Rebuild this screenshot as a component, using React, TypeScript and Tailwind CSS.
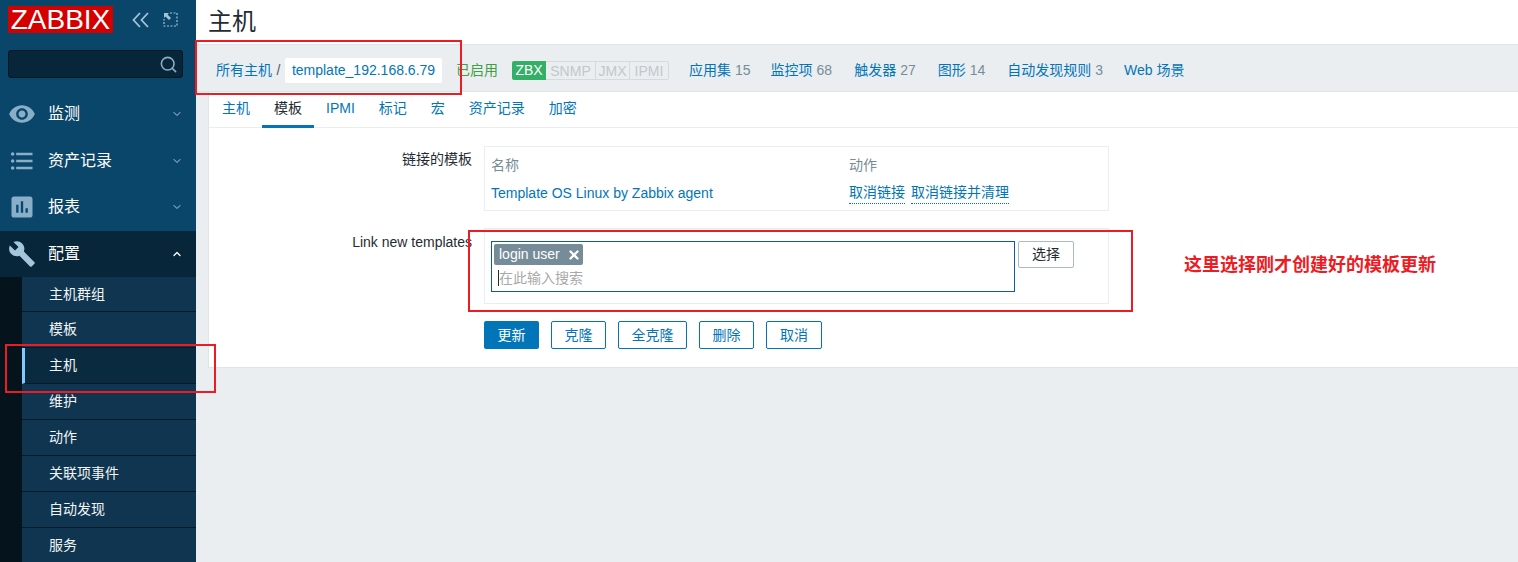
import { ChevronDown, ChevronUp, Search, X } from "lucide-react";
import { MdAssessment, MdBuild, MdFormatListBulleted, MdRemoveRedEye } from "react-icons/md";

const navItems = [
  { label: "监测", icon: <MdRemoveRedEye size={28} /> },
  { label: "资产记录", icon: <MdFormatListBulleted size={28} /> },
  { label: "报表", icon: <MdAssessment size={28} /> },
];

const subItems = ["主机群组", "模板", "主机", "维护", "动作", "关联项事件", "自动发现", "服务"];

const hostLinks = [
  { label: "应用集", count: "15", left: "" },
  { label: "监控项", count: "68", left: "ml-[20px]" },
  { label: "触发器", count: "27", left: "ml-[22px]" },
  { label: "图形", count: "14", left: "ml-[22px]" },
  { label: "自动发现规则", count: "3", left: "ml-[22px]" },
  { label: "Web 场景", count: "", left: "ml-[21px]" },
];

const tabs = ["主机", "模板", "IPMI", "标记", "宏", "资产记录", "加密"];

const buttons = [
  { label: "克隆", width: "w-[55px]" },
  { label: "全克隆", width: "w-[69px]" },
  { label: "删除", width: "w-[55px]" },
  { label: "取消", width: "w-[56px]" },
];

const Sidebar = () => (
  <aside className="w-[196px] shrink-0 h-full bg-[#0a466a] flex flex-col overflow-hidden">
    <div className="h-[91px] shrink-0 px-2 pt-[6px]">
      <div className="flex items-center">
        <div className="w-[105px] h-[27px] bg-[#d40000] text-white text-[28px] leading-[27px] text-center">
          ZABBIX
        </div>
        <svg width="18" height="16" viewBox="0 0 18 16" className="ml-[19px] text-[#a6c3d6]" fill="none" stroke="currentColor" strokeWidth="1.8">
          <path d="M8 1 1.5 8 8 15M16 1 9.5 8 16 15" />
        </svg>
        <svg width="15" height="15" viewBox="0 0 15 15" className="ml-[13px] text-[#a6c3d6]" fill="none" stroke="currentColor" strokeWidth="1.2">
          <path d="M7 1h7v13H1V7" strokeDasharray="2 1.5" />
          <path d="M1 1h5L4.500 2.500 8 6 6 8 2.500 4.500 1 6z" fill="currentColor" stroke="none" />
        </svg>
      </div>
      <div className="mt-[17px] h-[28px] w-[175px] rounded-[3px] bg-[#07263a] border border-[#041722] flex items-center justify-end pr-[4px]">
        <Search size={19} strokeWidth={2} className="text-[#8fb0c4]" />
      </div>
    </div>

    {navItems.map((item) => (
      <div key={item.label} className="h-[46.5px] shrink-0 flex items-center text-white">
        <span className="w-[48px] pl-[8px] text-[#88aec8] shrink-0 flex">{item.icon}</span>
        <span className="text-[16px]">{item.label}</span>
        <ChevronDown size={12} strokeWidth={2} className="ml-auto mr-[13px] text-[#b5ccdb]" />
      </div>
    ))}
    <div className="h-[46.5px] shrink-0 flex items-center text-white bg-[#08263a]">
      <span className="w-[48px] pl-[8px] text-[#a3c6dc] shrink-0 flex">
        <MdBuild size={28} />
      </span>
      <span className="text-[16px]">配置</span>
      <ChevronUp size={12} strokeWidth={2.5} className="ml-auto mr-[13px] text-white" />
    </div>

    <div className="flex-1 bg-[#04131c] pl-[22px]">
      {subItems.map((label, idx) => {
        const isActive = label === "主机";
        return (
          <div
            key={label}
            className={`${idx === 0 ? "h-[35px]" : "h-9"} flex items-center text-[14px] text-[#f2f5f7] border-b border-[#061a28] ${
              isActive ? "bg-[#0a2a40] border-l-[3px] border-l-[#7fcbff] pl-[24px]" : "bg-[#0f3550] pl-[27px]"
            }`}
          >
            {label}
          </div>
        );
      })}
    </div>
  </aside>
);

const HostBar = () => (
  <div className="h-[48px] shrink-0 bg-[#ebeef0] border-y border-[#dfe4e7] flex items-center pl-[20px] pt-[4px] text-[14px]">
    <span className="text-[#0275b8]">所有主机</span>
    <span className="w-[13px] text-center text-[#4a5a63]">/</span>
    <span className="h-[25px] w-[157px] bg-white rounded-[2px] flex items-center justify-center text-[#0275b8]">
      template_192.168.6.79
    </span>
    <span className="ml-[14px] text-[#429e47]">已启用</span>
    <div className="ml-[14px] flex h-[19px] text-[14px] leading-[19px] text-center">
      <span className="w-[34px] bg-[#34af67] text-white rounded-l-[2px]">ZBX</span>
      <span className="w-[50px] bg-[#ebeef0] text-[#c0c8cd] border-y border-r border-[#d5dadd]">SNMP</span>
      <span className="w-[34px] bg-[#ebeef0] text-[#c0c8cd] border-y border-r border-[#d5dadd]">JMX</span>
      <span className="w-[39px] bg-[#ebeef0] text-[#c0c8cd] border-y border-r border-[#d5dadd] rounded-r-[2px]">IPMI</span>
    </div>
    <div className="ml-[20px] flex">
      {hostLinks.map((link) => (
        <span key={link.label} className={link.left}>
          <span className="text-[#0275b8]">{link.label}</span>
          {link.count && <span className="ml-[4px] text-[#768d99]">{link.count}</span>}
        </span>
      ))}
    </div>
  </div>
);

const TabBar = () => (
  <div className="h-[36px] flex border-b border-[#ebeef0] pl-px text-[14px]">
    {tabs.map((tab) => (
      <div
        key={tab}
        className={`px-[12px] flex items-center border-b-[3px] -mb-px ${
          tab === "模板" ? "border-[#0275b8] text-[#1f2c33]" : "border-transparent text-[#0275b8]"
        }`}
      >
        {tab}
      </div>
    ))}
  </div>
);

const Form = () => (
  <div className="pt-[18px] pb-[18px] text-[14px]">
    <div className="flex">
      <div className="w-[263px] pt-[3px] text-right text-[#1f2c33]">链接的模板</div>
      <div className="ml-[12px] w-[625px] h-[65px] border border-[#ebeef0] px-[6px]">
        <div className="flex h-[29px] items-end text-[#768d99]">
          <span className="w-[358px]">名称</span>
          <span>动作</span>
        </div>
        <div className="flex mt-[7px] h-[20px] items-center text-[#0275b8]">
          <span className="w-[358px]">Template OS Linux by Zabbix agent</span>
          <span className="border-b border-dotted border-[#0275b8]">取消链接</span>
          <span className="ml-[6px] border-b border-dotted border-[#0275b8]">取消链接并清理</span>
        </div>
      </div>
    </div>

    <div className="flex mt-[17px]">
      <div className="w-[263px] pt-[4px] text-right text-[#1f2c33]">Link new templates</div>
      <div className="ml-[12px] w-[625px] h-[76px] border border-[#ebeef0] pl-[6px] pt-[12px] flex items-start">
        <div className="w-[524px] h-[51px] border border-[#0a5f94] pl-[2px] pt-[2px]">
          <div className="w-[89px] h-[21px] bg-[#768d99] rounded-[2px] text-white flex items-center pl-[5px]">
            login user
            <X size={14} strokeWidth={4} className="ml-[7px]" />
          </div>
          <div className="ml-[4px] mt-[2px] h-[21px] flex items-center text-[#a9a9a9]">
            <span className="border-l border-[#1f2c33] leading-[16px]">在此输入搜索</span>
          </div>
        </div>
        <button className="ml-[3px] w-[56px] h-[27px] border border-[#acbbc2] rounded-[2px] text-[#1f2c33] bg-white">
          选择
        </button>
      </div>
    </div>

    <div className="flex mt-[17px] ml-[275px] gap-[12px]">
      <button className="w-[55px] h-[28px] bg-[#0275b8] rounded-[2px] text-white">更新</button>
      {buttons.map((b) => (
        <button key={b.label} className={`${b.width} h-[28px] border border-[#0275b8] rounded-[2px] text-[#0275b8] bg-white`}>
          {b.label}
        </button>
      ))}
    </div>
  </div>
);

const App = () => (
  <div className="relative w-full h-[562px] overflow-hidden flex bg-[#ebeef0] font-['Liberation_Sans','Noto_Sans_CJK_SC',sans-serif]">
    <Sidebar />
    <main className="flex-1 min-w-0 flex flex-col">
      <div className="h-[44px] shrink-0 bg-white pl-[12px] flex items-center text-[24px] text-[#1f2c33]">主机</div>
      <HostBar />
      <div className="ml-[12px] bg-white border-l border-b border-[#dfe4e7]">
        <TabBar />
        <Form />
      </div>
    </main>

    {/* red annotations drawn over the screenshot */}
    <div className="absolute left-[195px] top-[40px] w-[267px] h-[55px] border-2 border-[#ed1c24]" />
    <div className="absolute left-[468px] top-[230px] w-[665px] h-[82px] border-2 border-[#ed1c24]" />
    <div className="absolute left-[5px] top-[344px] w-[211px] h-[49px] border-2 border-[#ed1c24]" />
    <div className="absolute left-[1184px] top-[254px] text-[18px] leading-[22px] font-bold text-[#ed1c24]">
      这里选择刚才创建好的模板更新
    </div>
  </div>
);

export default App;
